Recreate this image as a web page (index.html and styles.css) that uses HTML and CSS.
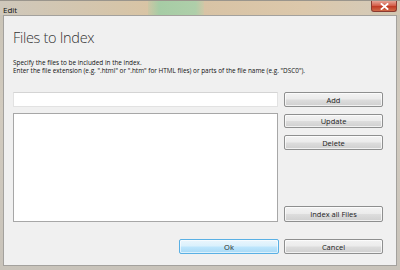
FILE: index.html
```
<!DOCTYPE html>
<html>

<head>
    <link rel="stylesheet" href="styles.css">
</head>

<body>
    <div class="window">
        <div class="titlebar">
            <span class="caption">Edit</span>
            <span class="blur b1"></span>
            <span class="blur b2"></span>
            <span class="close">
                <svg width="9" height="7" viewBox="0 0 9 7">
                    <path d="M1.5 1 L7.5 6 M7.5 1 L1.5 6" stroke="#fff" stroke-width="1.8" stroke-linecap="square"/>
                </svg>
            </span>
        </div>
        <div class="client">
            <h1 class="heading">Files to Index</h1>
            <p class="info">Specify the files to be included in the index.<br>Enter the file extension (e.g. ".html" or ".htm" for HTML files) or parts of the file name (e.g. "DSC0").</p>

            <div class="main">
                <div class="left">
                    <input class="pattern" type="text">
                    <div class="list"></div>
                </div>
                <div class="right">
                    <button class="btn">Add</button>
                    <button class="btn update">Update</button>
                    <button class="btn delete">Delete</button>
                    <button class="btn index">Index all Files</button>
                </div>
            </div>

            <div class="footer">
                <button class="btn ok">Ok</button>
                <button class="btn">Cancel</button>
            </div>
        </div>
    </div>
</body>

</html>
```

FILE: styles.css
```
* {
    padding: 0;
    margin: 0;
    box-sizing: border-box;
}

body {
    width: 400px;
    height: 270px;
    overflow: hidden;
    font-family: "Open Sans", "DejaVu Sans", sans-serif;
}

.window {
    width: 400px;
    height: 270px;
    display: flex;
    flex-direction: column;
    background: linear-gradient(to bottom, #c9c3b6, #d2cbbf 40%, #c8c3ba);
    border-top: 1px solid #9a958c;
}

.titlebar {
    height: 14px;
    position: relative;
    display: flex;
    align-items: center;
    padding-left: 3px;
    background: linear-gradient(to right, #cfc8bb 0%, #d6c5a9 30%, #dac4a3 40%, #d2c7b2 100%);
}

.caption {
    font-size: 8px;
    color: #111;
    position: relative;
    z-index: 1;
    top: 1px;
}

.blur {
    position: absolute;
    top: 0;
    height: 14px;
}

.blur.b1 {
    left: 148px;
    width: 56px;
    background: linear-gradient(to right, rgba(160, 205, 165, 0.2), rgba(160, 205, 165, 0.9) 20%, rgba(170, 208, 170, 0.9) 85%, rgba(170, 208, 170, 0.2));
}

.blur.b2 {
    left: 204px;
    width: 166px;
    background: linear-gradient(to right, #d8c3a5, #dcc8ab 60%, #d6cab6);
}

.close {
    position: absolute;
    right: 3px;
    top: 0;
    width: 26px;
    height: 11px;
    border: 1px solid #8a3a30;
    border-top: none;
    border-radius: 0 0 3px 3px;
    background: linear-gradient(to bottom, #e7a597, #d4604c 45%, #c13c26 55%, #d06a48);
    display: flex;
    align-items: center;
    justify-content: center;
}

.client {
    flex: 1;
    margin: 0 3px 4px 3px;
    border: 1px solid #a3a19d;
    background: #f0f0f0;
    padding: 0 13px 0 9px;
}

.heading {
    font-size: 14.5px;
    font-weight: 300;
    color: #333;
    line-height: 20px;
    margin-top: 12px;
    letter-spacing: -0.3px;
}

.info {
    font-size: 6.4px;
    line-height: 8px;
    color: #111;
    margin-top: 11px;
}

.main {
    display: grid;
    grid-template-columns: 265px 99px;
    column-gap: 6px;
    margin-top: 17px;
}

.left {
    display: flex;
    flex-direction: column;
}

.pattern {
    height: 15px;
    border: 1px solid #e2e2e2;
    border-top-color: #d4d4d4;
    background: #fff;
    outline: none;
}

.list {
    height: 109px;
    margin-top: 6px;
    background: #fff;
    border: 1px solid #a7a7a7;
}

.right {
    display: flex;
    flex-direction: column;
}

.btn {
    height: 15px;
    font-family: "Open Sans", "DejaVu Sans", sans-serif;
    font-size: 7.5px;
    color: #222;
    border: 1px solid #8e8f8f;
    border-radius: 2px;
    background: linear-gradient(to bottom, #f3f3f3, #ebebeb 48%, #dddddd 52%, #cfcfcf);
    box-shadow: inset 0 0 0 1px rgba(255, 255, 255, 0.7);
}

.update {
    margin-top: 7px;
    height: 14px;
}

.delete {
    margin-top: 7px;
}

.index {
    margin-top: auto;
    height: 16px;
}

.footer {
    display: flex;
    justify-content: flex-end;
    gap: 5px;
    margin-top: 17px;
}

.footer .btn {
    width: 99px;
}

.footer .ok {
    width: 100px;
    border-color: #5ab0e4;
    background: linear-gradient(to bottom, #eaf6fd, #d9f0fc 48%, #bee6fd 52%, #a7d9f5);
    box-shadow: inset 0 0 0 1px rgba(255, 255, 255, 0.6);
}
```
